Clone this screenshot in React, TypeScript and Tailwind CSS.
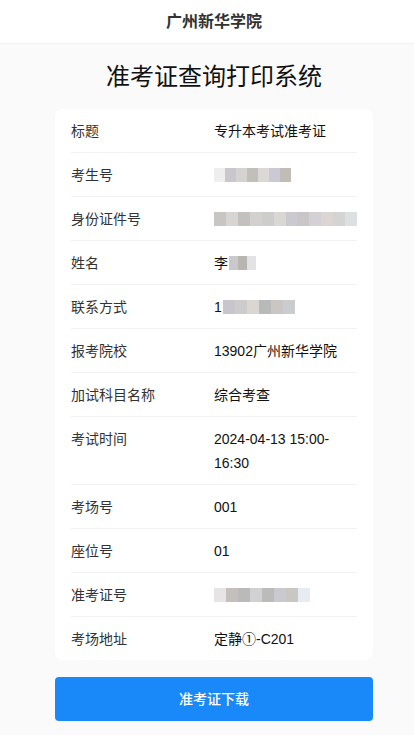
const rows: { label: string; value?: string; mask?: { lead?: string; colors: string[]; w: number } }[] = [
  { label: '标题', value: '专升本考试准考证' },
  { label: '考生号', mask: { colors: ['#efeeee', '#c9c7cb', '#d5d3d1', '#c2bfba', '#dcd8d5', '#cbc9d4', '#c1bcb5'], w: 11 } },
  {
    label: '身份证件号',
    mask: {
      colors: ['#c8c5c4', '#d6d5d3', '#c3c1be', '#d2d1cf', '#cdcdcc', '#d9d7d3', '#cac9d0', '#c8c6c6', '#d3d0d6', '#dcd6d3', '#d4d4d2', '#dde0e0'],
      w: 12,
    },
  },
  { label: '姓名', mask: { lead: '李', colors: ['#c9c8ca', '#b9b6b2', '#e3e2e4'], w: 9 } },
  { label: '联系方式', mask: { lead: '1', colors: ['#c8c6cc', '#cdcbcb', '#dad6d2', '#b8b9b9', '#c9c6c4', '#cbccd0'], w: 12 } },
  { label: '报考院校', value: '13902广州新华学院' },
  { label: '加试科目名称', value: '综合考查' },
  { label: '考试时间', value: '2024-04-13 15:00-16:30' },
  { label: '考场号', value: '001' },
  { label: '座位号', value: '01' },
  { label: '准考证号', mask: { colors: ['#e6e4e4', '#c4bfbd', '#bbbabb', '#d1d0d2', '#bcbbbb', '#cac9cf', '#cac6c2', '#e6ecf2'], w: 12 } },
  { label: '考场地址', value: '定静①-C201' },
];

export default function App() {
  return (
    <div className="w-full overflow-hidden bg-[#fafafa]">
      <div
        className="w-[428px] min-h-[735px] bg-[#fafafa] text-[14px]"
        style={{ fontFamily: '"Liberation Sans", "Noto Sans CJK SC", sans-serif' }}
      >
        <header className="h-[44px] bg-white border-b border-[#f2f2f2] flex items-center justify-center">
          <h1 className="text-[16px] font-bold text-[#323233]">广州新华学院</h1>
        </header>

        <h2 className="text-center text-[24px] leading-[32px] text-[#111] pt-[17px] pb-[16px]">准考证查询打印系统</h2>

        <div className="px-[55px] pb-[14px]">
          <div className="bg-white rounded-[8px] px-[16px]">
            {rows.map((r, i) => (
              <div
                key={r.label}
                className={`flex pt-[10px] pb-[9px] leading-[24px] ${i < rows.length - 1 ? 'border-b border-[#f2f2f2]' : ''}`}
              >
                <div className="w-1/2 text-[#323233]">{r.label}</div>
                <div className="w-1/2 text-[#111]">
                  {r.value ? (
                    r.value
                  ) : (
                    <div className="flex items-center h-[24px]">
                      {r.mask?.lead && <span className="mr-[1px]">{r.mask.lead}</span>}
                      {r.mask?.colors.map((c, j) => (
                        <span key={j} className="h-[14px] inline-block" style={{ background: c, width: r.mask!.w }} />
                      ))}
                    </div>
                  )}
                </div>
              </div>
            ))}
          </div>

          <button className="mt-[17px] w-full h-[44px] rounded-[4px] bg-[#1989fa] text-white text-[14px] font-medium">
            准考证下载
          </button>
        </div>
      </div>
    </div>
  );
}
